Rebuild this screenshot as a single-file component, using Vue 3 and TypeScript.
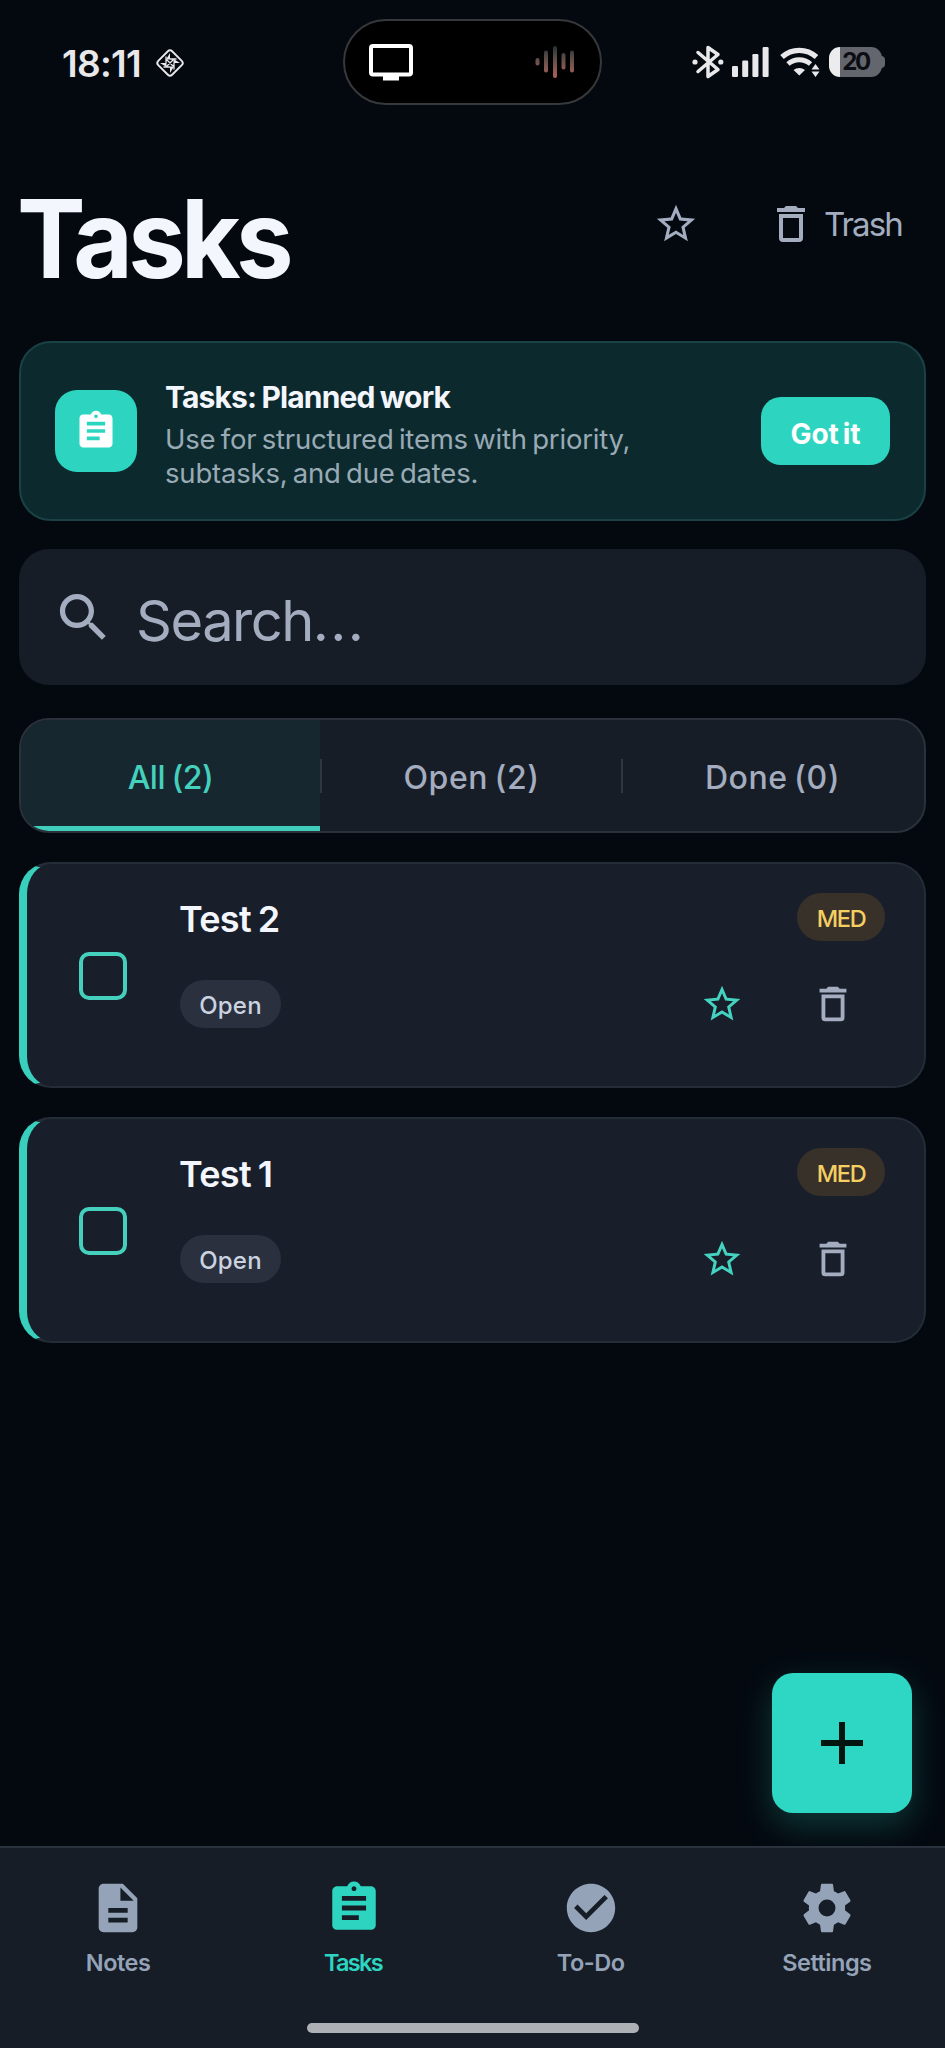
<script setup lang="ts">
interface Tab {
  label: string
  count: number
}
interface Task {
  id: number
  title: string
  status: string
  priority: string
}
interface NavItem {
  label: string
  icon: string
}

const icons = {
  star: 'M22 9.24l-7.19-.62L12 2 9.19 8.63 2 9.24l5.46 4.73L5.82 21 12 17.27 18.18 21l-1.63-7.03L22 9.24zM12 15.4l-3.76 2.27 1-4.28-3.32-2.88 4.38-.38L12 6.1l1.71 4.04 4.38.38-3.32 2.88 1 4.28L12 15.4z',
  trash: 'M6,19A2,2 0 0,0 8,21H16A2,2 0 0,0 18,19V7H6V19M8,9H16V19H8V9M15.5,4L14.5,3H9.5L8.5,4H5V6H19V4H15.5Z',
  clipboard: 'M19 3h-4.18C14.4 1.84 13.3 1 12 1c-1.3 0-2.4.84-2.82 2H5c-1.1 0-2 .9-2 2v14c0 1.1.9 2 2 2h14c1.1 0 2-.9 2-2V5c0-1.1-.9-2-2-2zm-7 0c.55 0 1 .45 1 1s-.45 1-1 1-1-.45-1-1 .45-1 1-1zm2 14H7v-2h7v2zm3-4H7v-2h10v2zm0-4H7V7h10v2z',
  search: 'M15.5 14h-.79l-.28-.27C15.41 12.59 16 11.11 16 9.5 16 5.91 13.09 3 9.5 3S3 5.91 3 9.5 5.91 16 9.5 16c1.61 0 3.09-.59 4.23-1.57l.27.28v.79l5 4.99L20.49 19l-4.99-5zm-6 0C7.01 14 5 11.99 5 9.5S7.01 5 9.5 5 14 7.01 14 9.5 11.99 14 9.5 14z',
  note: 'M14 2H6c-1.1 0-1.99.9-1.99 2L4 20c0 1.1.89 2 1.99 2H18c1.1 0 2-.9 2-2V8l-6-6zm2 16H8v-2h8v2zm0-4H8v-2h8v2zm-3-5V3.5L18.5 9H13z',
  check: 'M12 2C6.48 2 2 6.48 2 12s4.48 10 10 10 10-4.48 10-10S17.52 2 12 2zm-2 15l-5-5 1.41-1.41L10 14.17l7.59-7.59L19 8l-9 9z',
  gear: 'M12,15.5A3.5,3.5 0 0,1 8.5,12A3.5,3.5 0 0,1 12,8.5A3.5,3.5 0 0,1 15.5,12A3.5,3.5 0 0,1 12,15.5M19.43,12.97C19.47,12.65 19.5,12.33 19.5,12C19.5,11.67 19.47,11.34 19.43,11L21.54,9.37C21.73,9.22 21.78,8.95 21.66,8.73L19.66,5.27C19.54,5.05 19.27,4.96 19.05,5.05L16.56,6.05C16.04,5.66 15.5,5.32 14.87,5.07L14.5,2.42C14.46,2.18 14.25,2 14,2H10C9.75,2 9.54,2.18 9.5,2.42L9.13,5.07C8.5,5.32 7.96,5.66 7.44,6.05L4.95,5.05C4.73,4.96 4.46,5.05 4.34,5.27L2.34,8.73C2.21,8.95 2.27,9.22 2.46,9.37L4.57,11C4.53,11.34 4.5,11.67 4.5,12C4.5,12.33 4.53,12.65 4.57,12.97L2.46,14.63C2.27,14.78 2.21,15.05 2.34,15.27L4.34,18.73C4.46,18.95 4.73,19.03 4.95,18.95L7.44,17.94C7.96,18.34 8.5,18.68 9.13,18.93L9.5,21.58C9.54,21.82 9.75,22 10,22H14C14.25,22 14.46,21.82 14.5,21.58L14.87,18.93C15.5,18.67 16.04,18.34 16.56,17.94L19.05,18.95C19.27,19.03 19.54,18.95 19.66,18.73L21.66,15.27C21.78,15.05 21.73,14.78 21.54,14.63L19.43,12.97Z',
}

const tabs: Tab[] = [
  { label: 'All', count: 2 },
  { label: 'Open', count: 2 },
  { label: 'Done', count: 0 },
]
const activeTab = 'All'

const tasks: Task[] = [
  { id: 2, title: 'Test 2', status: 'Open', priority: 'MED' },
  { id: 1, title: 'Test 1', status: 'Open', priority: 'MED' },
]

const navItems: NavItem[] = [
  { label: 'Notes', icon: icons.note },
  { label: 'Tasks', icon: icons.clipboard },
  { label: 'To-Do', icon: icons.check },
  { label: 'Settings', icon: icons.gear },
]
const activeNav = 'Tasks'
</script>

<template>
  <div class="screen">
    <div class="status-bar">
      <span class="clock">18:11</span>
      <svg class="diamond" viewBox="0 0 30 30">
        <rect x="5.2" y="5.2" width="19.6" height="19.6" rx="3" transform="rotate(45 15 15)" fill="none" stroke="currentColor" stroke-width="1.9" />
        <path d="M15 5v6.500h-4zM15 25v-6.500h4zM5 15h6.500v4zM25 15h-6.500v-4z" fill="currentColor" />
        <path d="M11 8.500v6.500M19 21.500V15M8.500 19H15M21.500 11H15M11 11l8 8M19 11l-8 8" fill="none" stroke="currentColor" stroke-width="1.300" />
      </svg>
      <div class="island">
        <svg class="monitor" viewBox="0 0 44 37">
          <rect x="2" y="2" width="40" height="28.500" rx="2" fill="none" stroke="#fff" stroke-width="4" />
          <rect x="14" y="31" width="16" height="5.500" fill="#fff" />
        </svg>
        <svg class="wave" viewBox="0 0 40 34">
          <defs>
            <linearGradient id="waveFill" gradientUnits="userSpaceOnUse" x1="0" y1="0" x2="0" y2="34">
              <stop offset="0" stop-color="#1a3033" />
              <stop offset="0.400" stop-color="#5f4d4a" />
              <stop offset="1" stop-color="#b0645a" />
            </linearGradient>
          </defs>
          <g fill="url(#waveFill)">
            <rect x="0.500" y="13" width="4" height="7.500" rx="2" />
            <rect x="9" y="5.500" width="4" height="22" rx="2" />
            <rect x="18" y="1" width="4" height="32" rx="2" />
            <rect x="26.500" y="8" width="4" height="16.500" rx="2" />
            <rect x="35" y="5.500" width="4" height="22" rx="2" />
          </g>
        </svg>
      </div>
      <div class="indicators">
        <svg class="bluetooth" viewBox="0 0 32 36">
          <path d="M6 8.500L26 25.500 16 32.500V3.500L26 10.500 6 27.500" fill="none" stroke="currentColor" stroke-width="3.500" stroke-linejoin="round" stroke-linecap="round" />
          <circle cx="3" cy="18" r="2.600" fill="currentColor" />
          <circle cx="28.800" cy="18" r="2.600" fill="currentColor" />
        </svg>
        <svg class="signal" viewBox="0 0 37 30">
          <rect x="0" y="19" width="6" height="11" rx="1.200" fill="currentColor" />
          <rect x="10.200" y="13.500" width="6" height="16.500" rx="1.200" fill="currentColor" />
          <rect x="20.400" y="7" width="6" height="23" rx="1.200" fill="currentColor" />
          <rect x="30.600" y="0" width="6" height="30" rx="1.200" fill="currentColor" />
        </svg>
        <svg class="wifi" viewBox="0 0 40 30">
          <path d="M2 10a25.500 25.500 0 0 1 34.500 0" fill="none" stroke="currentColor" stroke-width="5.200" />
          <path d="M8 17a17 17 0 0 1 22.500 0" fill="none" stroke="currentColor" stroke-width="5" />
          <path d="M13.500 23a9 9 0 0 1 11.500 0L19.300 28.500z" fill="currentColor" />
          <path d="M31.500 22.500l4-5.500 4 5.500zM31.500 24.500h8l-4 5.500z" fill="currentColor" />
        </svg>
        <div class="battery"><span class="battery-level">20</span></div>
      </div>
    </div>

    <header class="header">
      <h1 class="title">Tasks</h1>
      <div class="header-actions">
        <svg class="icon-star" viewBox="0 0 24 24"><path :d="icons.star" fill="currentColor" /></svg>
        <svg class="icon-trash" viewBox="0 0 24 24"><path :d="icons.trash" fill="currentColor" /></svg>
        <span class="trash-label">Trash</span>
      </div>
    </header>

    <main class="content">
      <section class="banner">
        <div class="banner-icon">
          <svg viewBox="0 0 24 24"><path :d="icons.clipboard" fill="currentColor" /></svg>
        </div>
        <div class="banner-text">
          <div class="banner-title">Tasks: Planned work</div>
          <div class="banner-desc">Use for structured items with priority,<br />subtasks, and due dates.</div>
        </div>
        <button class="banner-button">Got it</button>
      </section>

      <div class="search">
        <svg class="search-icon" viewBox="0 0 24 24"><path :d="icons.search" fill="currentColor" /></svg>
        <span class="search-text">Search<span class="dots">...</span></span>
      </div>

      <div class="tabs">
        <div v-for="tab in tabs" :key="tab.label" class="tab" :class="{ active: tab.label === activeTab }">
          <span class="tab-label" :class="{ tight: tab.label === activeTab }">{{ tab.label }} ({{ tab.count }})</span>
        </div>
      </div>

      <article v-for="task in tasks" :key="task.id" class="card">
        <span class="checkbox"></span>
        <div class="card-body">
          <div class="card-row">
            <span class="card-title">{{ task.title }}</span>
            <span class="chip priority">{{ task.priority }}</span>
          </div>
          <div class="card-row">
            <span class="chip status">{{ task.status }}</span>
            <div class="card-actions">
              <svg class="card-star" viewBox="0 0 24 24"><path :d="icons.star" fill="currentColor" /></svg>
              <svg class="card-trash" viewBox="0 0 24 24"><path :d="icons.trash" fill="currentColor" /></svg>
            </div>
          </div>
        </div>
      </article>
    </main>

    <button class="fab" aria-label="Add task">
      <svg viewBox="0 0 42 42"><path d="M18 0h6v18h18v6H24v18h-6V24H0v-6h18z" fill="currentColor" /></svg>
    </button>

    <nav class="bottom-nav">
      <div class="nav-items">
        <div v-for="item in navItems" :key="item.label" class="nav-item" :class="{ active: item.label === activeNav }">
          <svg viewBox="0 0 24 24"><path :d="item.icon" fill="currentColor" /></svg>
          <span class="nav-label" :class="{ tight: item.label === activeNav }">{{ item.label }}</span>
        </div>
      </div>
      <div class="home-indicator"></div>
    </nav>
  </div>
</template>

<style>
body {
  background: #040910;
}
</style>

<style scoped>
.screen {
  position: relative;
  box-sizing: border-box;
  width: 945px;
  height: 2048px;
  overflow: hidden;
  display: flex;
  flex-direction: column;
  background: #040910;
  color: #f3f6fd;
  font-family: Inter, "Liberation Sans", sans-serif;
  white-space: nowrap;
}
.screen * {
  box-sizing: border-box;
}
svg {
  display: block;
  flex: none;
}
button {
  border: 0;
  margin: 0;
  font-family: inherit;
}

.status-bar {
  display: flex;
  align-items: center;
  height: 124px;
  flex: none;
  padding-left: 62px;
  color: #e8e8ea;
}
.clock {
  width: 93px;
  font-size: 37px;
  font-weight: 600;
  line-height: 44px;
  letter-spacing: -0.7px;
  padding-top: 3px;
}
.diamond {
  width: 30px;
  height: 30px;
  margin-top: 1px;
}
.island {
  display: flex;
  align-items: center;
  justify-content: space-between;
  width: 259px;
  height: 86px;
  margin-left: 158px;
  padding: 0 25px 0 24px;
  border: 2px solid #37383c;
  border-radius: 43px;
  background: #000;
}
.monitor {
  width: 44px;
  height: 37px;
}
.wave {
  width: 40px;
  height: 34px;
}
.indicators {
  display: flex;
  align-items: center;
  margin-left: 90px;
}
.bluetooth {
  width: 32px;
  height: 36px;
}
.signal {
  width: 37px;
  height: 30px;
  margin-left: 8px;
}
.wifi {
  width: 40px;
  height: 30px;
  margin-left: 11px;
}
.battery {
  position: relative;
  display: flex;
  align-items: center;
  justify-content: center;
  width: 53px;
  height: 30px;
  margin-left: 9px;
  border-radius: 11px;
  background: linear-gradient(90deg, #ececee 11px, #63666c 11px);
}
.battery::after {
  content: '';
  position: absolute;
  left: 52px;
  top: 9px;
  width: 4px;
  height: 12px;
  border-radius: 0 4px 4px 0;
  background: #63666c;
}
.battery-level {
  color: #0b0d12;
  font-size: 24px;
  font-weight: 700;
  line-height: 30px;
  letter-spacing: -2.500px;
}

.header {
  display: flex;
  align-items: flex-start;
  height: 217px;
  flex: none;
  padding: 0 43px 0 17px;
}
.title {
  margin: 60px 0 0;
  font-size: 108px;
  font-weight: 700;
  line-height: 110px;
  letter-spacing: -5px;
  transform: scaleX(0.952);
  transform-origin: left center;
}
.header-actions {
  display: flex;
  align-items: center;
  height: 48px;
  margin: 76px 0 0 auto;
  color: #a3adbf;
}
.icon-star {
  width: 46px;
  height: 46px;
  margin-right: 68px;
}
.icon-trash {
  width: 48px;
  height: 48px;
  margin-right: 9px;
}
.trash-label {
  width: 78px;
  font-size: 33px;
  line-height: 40px;
  letter-spacing: -1.900px;
}

.content {
  display: flex;
  flex-direction: column;
  padding: 0 19px;
}
.banner {
  display: flex;
  align-items: center;
  height: 180px;
  padding: 0 34px;
  border: 2px solid #1a4145;
  border-radius: 32px;
  background: #0c2a2e;
}
.banner-icon {
  display: flex;
  align-items: center;
  justify-content: center;
  width: 82px;
  height: 82px;
  border-radius: 22px;
  background: #2dd5c1;
  color: #fff;
}
.banner-icon svg {
  width: 44px;
  height: 44px;
}
.banner-text {
  margin-left: 28px;
  padding-top: 7px;
}
.banner-title {
  font-size: 30px;
  font-weight: 650;
  line-height: 34px;
  letter-spacing: -0.850px;
  word-spacing: -1px;
}
.banner-desc {
  margin-top: 8px;
  color: #9aaab5;
  font-size: 27.500px;
  line-height: 34px;
  letter-spacing: -0.200px;
  word-spacing: -2.200px;
}
.banner-button {
  width: 129px;
  height: 68px;
  margin-left: auto;
  padding: 6px 0 0;
  border-radius: 20px;
  background: #2dd5c1;
  color: #fff;
  font-size: 28px;
  font-weight: 700;
  letter-spacing: -0.100px;
  word-spacing: -2.500px;
}

.search {
  display: flex;
  align-items: center;
  height: 136px;
  margin-top: 28px;
  padding-left: 33px;
  border-radius: 30px;
  background: #161d27;
  color: #a3adbf;
}
.search-icon {
  width: 63px;
  height: 63px;
}
.search-text {
  margin-left: 21px;
  padding-top: 8px;
  font-size: 56px;
  line-height: 64px;
  letter-spacing: -1.500px;
}
.dots {
  letter-spacing: 1.300px;
}

.tabs {
  display: grid;
  grid-template-columns: repeat(3, 1fr);
  height: 115px;
  margin-top: 33px;
  border: 2px solid #2a313b;
  border-radius: 30px;
  background: #161d27;
  overflow: hidden;
}
.tab {
  position: relative;
  display: flex;
  align-items: center;
  justify-content: center;
  margin-right: 2px;
  padding-top: 4px;
  color: #a3adbf;
}
.tab:not(:last-child)::after {
  content: '';
  position: absolute;
  right: -2px;
  top: 39px;
  width: 2px;
  height: 34px;
  background: #2f3641;
}
.tab.active {
  border-bottom: 5px solid #41cdbb;
  padding-top: 9px;
  background: #17272f;
  color: #45cfbd;
}
.tab-label {
  font-size: 32px;
  font-weight: 500;
  line-height: 40px;
  letter-spacing: 0.600px;
  word-spacing: -2.800px;
}
.tab-label.tight {
  letter-spacing: -0.500px;
  word-spacing: -1.500px;
}

.card {
  display: flex;
  align-items: center;
  height: 226px;
  margin-top: 29px;
  padding: 0 39px 0 52px;
  border: 2px solid #242c37;
  border-left: 8px solid #38d0bd;
  border-radius: 32px;
  background: #181f2a;
}
.checkbox {
  flex: none;
  width: 48px;
  height: 48px;
  margin-top: 1px;
  border: 4px solid #45cfbd;
  border-radius: 10px;
}
.card-body {
  display: flex;
  flex-direction: column;
  gap: 38px;
  flex: 1;
  align-self: flex-start;
  margin-left: 53px;
  padding-top: 28px;
}
.card-row {
  display: flex;
  align-items: center;
  justify-content: space-between;
  height: 49px;
}
.card-title {
  margin-left: -1px;
  padding-top: 4px;
  font-size: 36px;
  font-weight: 600;
  line-height: 44px;
  letter-spacing: -0.700px;
  word-spacing: -1.500px;
}
.chip {
  display: flex;
  align-items: center;
  justify-content: center;
  height: 48px;
  padding-top: 4px;
  border-radius: 24px;
  font-size: 24px;
  font-weight: 500;
}
.chip.priority {
  width: 88px;
  background: #383129;
  color: #f5cf62;
  font-size: 23.500px;
  letter-spacing: -1.300px;
}
.chip.status {
  width: 101px;
  background: #2a303d;
  color: #cbd3e1;
  letter-spacing: 0.200px;
}
.card-actions {
  display: flex;
  align-items: center;
  gap: 66px;
  margin-right: 29px;
}
.card-star {
  width: 44px;
  height: 44px;
  color: #45d3c1;
}
.card-trash {
  width: 46px;
  height: 46px;
  color: #a3adbf;
}

.fab {
  position: absolute;
  left: 772px;
  top: 1673px;
  display: flex;
  align-items: center;
  justify-content: center;
  width: 140px;
  height: 140px;
  padding: 0;
  border-radius: 21px;
  background: #2dd7c3;
  color: #03150f;
  box-shadow: 0 12px 34px rgba(45, 212, 191, 0.24);
}
.fab svg {
  width: 42px;
  height: 42px;
}

.bottom-nav {
  position: relative;
  display: flex;
  flex-direction: column;
  align-items: center;
  height: 202px;
  flex: none;
  margin-top: auto;
  border-top: 2px solid #2a323d;
  background: #161d27;
}
.nav-items {
  display: grid;
  grid-template-columns: repeat(4, 1fr);
  width: 100%;
  padding-top: 31px;
}
.nav-item {
  display: flex;
  flex-direction: column;
  align-items: center;
  color: #94a3b8;
}
.nav-item.active {
  color: #2dd5c1;
}
.nav-item svg {
  width: 58px;
  height: 58px;
}
.nav-label {
  margin-top: 11px;
  font-size: 23.500px;
  font-weight: 600;
  line-height: 30px;
  letter-spacing: -0.480px;
}
.nav-label.tight {
  margin-right: 3px;
  letter-spacing: -1.700px;
}
.home-indicator {
  width: 332px;
  height: 10px;
  margin-top: 45px;
  border-radius: 5px;
  background: #adb0b4;
}
</style>
